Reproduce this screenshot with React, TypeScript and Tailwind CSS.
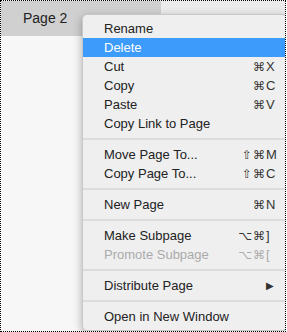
type Item = { label: string; mods?: string; keyChar?: string; disabled?: boolean; active?: boolean; submenu?: boolean };

const groups: Item[][] = [
  [
    { label: "Rename" },
    { label: "Delete", active: true },
    { label: "Cut", mods: "⌘", keyChar: "X" },
    { label: "Copy", mods: "⌘", keyChar: "C" },
    { label: "Paste", mods: "⌘", keyChar: "V" },
    { label: "Copy Link to Page" },
  ],
  [
    { label: "Move Page To...", mods: "⇧⌘", keyChar: "M" },
    { label: "Copy Page To...", mods: "⇧⌘", keyChar: "C" },
  ],
  [{ label: "New Page", mods: "⌘", keyChar: "N" }],
  [
    { label: "Make Subpage", mods: "⌥⌘", keyChar: "]" },
    { label: "Promote Subpage", mods: "⌥⌘", keyChar: "[", disabled: true },
  ],
  [{ label: "Distribute Page", submenu: true }],
  [{ label: "Open in New Window" }],
];

function MenuRow({ item }: { item: Item }) {
  const color = item.active ? "text-white" : item.disabled ? "text-[#ababab]" : "text-[#222]";
  return (
    <div
      className={`flex items-center h-[19px] pl-[21px] pr-[7px] ${item.active ? "bg-[#3d9bfc]" : ""} ${color}`}
    >
      <span className="flex-1">{item.label}</span>
      {item.mods && (
        <span className={`flex items-center ${item.disabled ? "" : "text-[#333]"}`}>
          <span className="text-right text-[12px] tracking-[1px]" style={{ fontFamily: '"DejaVu Sans", sans-serif' }}>
            {item.mods}
          </span>
          <span className="w-[13px]">{item.keyChar}</span>
        </span>
      )}
      {item.submenu && (
        <span className="w-[13px] text-[10px] text-[#333]">▶</span>
      )}
    </div>
  );
}

export default function App() {
  return (
    <div
      className="relative w-[286px] h-[332px] border border-dotted border-black bg-[#f7f7f7] overflow-hidden"
      style={{ fontFamily: '"Liberation Sans", Arial, sans-serif' }}
    >
      {/* tab bar */}
      <div className="flex h-[35px]">
        <div className="w-[160px] bg-[#d0d0d0] pl-[22px] pt-[7px] text-[14px] text-[#222]">Page 2</div>
        <div className="flex-1 bg-[#ebebeb]" />
      </div>

      {/* context menu */}
      <div className="absolute left-[81px] top-[13px] w-[205px] rounded-[5px] bg-[#efefef] border border-[#c8c8c8] shadow-[0_3px_10px_rgba(0,0,0,0.3)] py-[4px] text-[13px]">
        {groups.map((g, gi) => (
          <div key={gi}>
            {gi > 0 && (
              <div className="h-[12px] flex items-center">
                <div className="h-[2px] w-full bg-[#dcdcdc]" />
              </div>
            )}
            {g.map((item) => (
              <MenuRow key={item.label} item={item} />
            ))}
          </div>
        ))}
      </div>
    </div>
  );
}
